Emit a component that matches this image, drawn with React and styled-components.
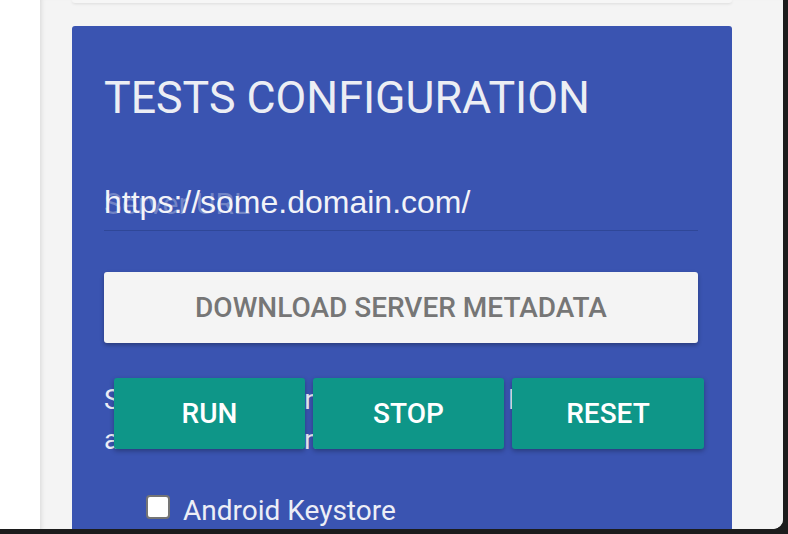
import React from "react";
import styled, { createGlobalStyle } from "styled-components";

const GlobalStyle = createGlobalStyle`
  html, body {
    margin: 0;
    padding: 0;
    background: #1c1c1c;
    overflow: hidden;
  }
`;

const Window = styled.div`
  width: 783px;
  height: 529px;
  display: flex;
  overflow: hidden;
  background: #ffffff;
  border-bottom-right-radius: 10px;
  font-family: Roboto, "Noto Sans", sans-serif;
`;

const Sidebar = styled.aside`
  width: 40px;
  flex-shrink: 0;
  background: #ffffff;
`;

const Main = styled.main`
  flex: 1;
  background: #f4f4f4;
  padding: 0 51px 0 32px;
  box-shadow: inset 5px 0 5px -4px rgba(0, 0, 0, 0.12);
  display: flex;
  flex-direction: column;
  gap: 23px;
`;

const PrevCard = styled.div`
  height: 3px;
  flex-shrink: 0;
  background: #f6f6f6;
  border-radius: 0 0 3px 3px;
  box-shadow: 0 1px 3px rgba(0, 0, 0, 0.1);
`;

const Card = styled.section`
  position: relative;
  background: #3a54b1;
  border-radius: 3px 3px 0 0;
  padding: 49px 34px 0 32px;
  color: #eceef6;
  flex: 1;
`;

const Title = styled.h1`
  margin: 0;
  font-size: 44.7px;
  line-height: 46px;
  font-weight: 400;
  color: #eceef4;
`;

const Field = styled.div`
  position: relative;
  margin-top: 53px;
`;

const Placeholder = styled.label`
  position: absolute;
  left: 0;
  top: 12px;
  font-family: Roboto, sans-serif;
  font-size: 30px;
  color: rgba(255, 255, 255, 0.28);
  pointer-events: none;
`;

const Input = styled.input`
  display: block;
  width: 100%;
  box-sizing: border-box;
  height: 57px;
  padding: 0;
  border: none;
  border-bottom: 1px solid #2f4798;
  background: transparent;
  color: #f2f3f8;
  font-family: "Liberation Sans", Arial, sans-serif;
  font-size: 32px;
  outline: none;
`;

const MetaButton = styled.button`
  display: block;
  width: 100%;
  height: 71px;
  margin-top: 41px;
  border: none;
  border-radius: 3px;
  background: #f4f4f4;
  color: #767676;
  font-family: Roboto, sans-serif;
  font-weight: 500;
  font-size: 28px;
  text-transform: uppercase;
  box-shadow: 0 2px 4px rgba(0, 0, 0, 0.3);
`;

const Intro = styled.p`
  margin: 37px 0 0;
  font-size: 28px;
  line-height: 40px;
  color: #eceef6;
`;

const Options = styled.div`
  margin-top: 34px;
  padding-left: 42px;
  display: flex;
  flex-direction: column;
`;

const Option = styled.label`
  display: flex;
  align-items: flex-start;
  gap: 13px;
  font-size: 28px;
  color: #eceef6;
`;

const Box = styled.span`
  width: 20px;
  height: 20px;
  margin-top: 1px;
  border: 2px solid #757575;
  border-radius: 4px;
  background: #ffffff;
  flex-shrink: 0;
`;

const Actions = styled.div`
  position: absolute;
  left: 42px;
  top: 352px;
  display: flex;
  gap: 8px;
`;

const ActionButton = styled.button`
  width: ${(p) => (p.$wide ? "192px" : "191px")};
  height: 71px;
  border: none;
  border-radius: 3px;
  background: #0e9688;
  color: #ffffff;
  font-family: Roboto, sans-serif;
  font-weight: 500;
  font-size: 28px;
  text-transform: uppercase;
  box-shadow: 0 2px 5px rgba(0, 0, 0, 0.3);
`;

export default function App() {
  return (
    <>
      <GlobalStyle />
      <Window>
        <Sidebar />
        <Main>
          <PrevCard />
          <Card>
            <Title>TESTS CONFIGURATION</Title>
            <Field>
              <Placeholder>Server URL</Placeholder>
              <Input defaultValue="https://some.domain.com/" />
            </Field>
            <MetaButton>Download server metadata</MetaButton>
            <Intro>
              Select the authenticators to run. Leave blank and all will be
              run.
            </Intro>
            <Options>
              <Option>
                <Box />
                Android Keystore
              </Option>
            </Options>
            <Actions>
              <ActionButton>Run</ActionButton>
              <ActionButton>Stop</ActionButton>
              <ActionButton $wide>Reset</ActionButton>
            </Actions>
          </Card>
        </Main>
      </Window>
    </>
  );
}
